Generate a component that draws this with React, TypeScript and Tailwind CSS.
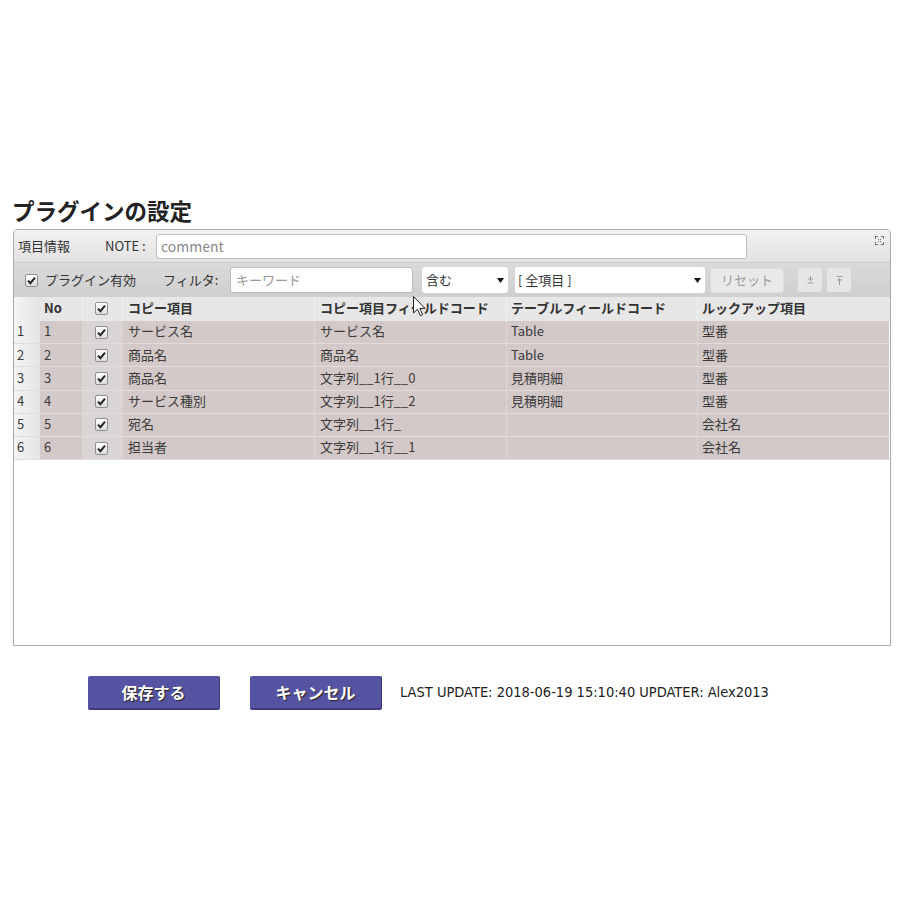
import React from 'react';

const jp = { fontFamily: '"Noto Sans CJK JP", "Noto Sans", sans-serif' };

const rows = [
  { n: '1', item: 'サービス名', field: 'サービス名', table: 'Table', lookup: '型番' },
  { n: '2', item: '商品名', field: '商品名', table: 'Table', lookup: '型番' },
  { n: '3', item: '商品名', field: '文字列__1行__0', table: '見積明細', lookup: '型番' },
  { n: '4', item: 'サービス種別', field: '文字列__1行__2', table: '見積明細', lookup: '型番' },
  { n: '5', item: '宛名', field: '文字列__1行_', table: '', lookup: '会社名' },
  { n: '6', item: '担当者', field: '文字列__1行__1', table: '', lookup: '会社名' },
];

const cols = 'grid grid-cols-[26px_43px_40px_192px_192px_191px_191px]';

const Check = () => (
  <span className="inline-flex w-[13px] h-[13px] items-center justify-center rounded-[2px] border border-[#8f8f8f] bg-gradient-to-b from-white to-[#dcdcdc]">
    <svg width="9" height="9" viewBox="0 0 9 9">
      <path d="M1 4.6 L3.4 7.2 L8 1.6" fill="none" stroke="#222" strokeWidth="1.9" />
    </svg>
  </span>
);

const Arrow = () => (
  <svg width="7" height="5" viewBox="0 0 7 5" className="shrink-0">
    <path d="M0 0 H7 L3.5 5 Z" fill="#111" />
  </svg>
);

export default function App() {
  return (
    <div className="relative w-[920px] h-[920px] bg-white text-[#333]" style={jp}>
      <div className="pt-[195px] px-[13px]">
        <h1 className="text-[22.5px] font-bold leading-[30px] text-[#222] -ml-[1px] mb-[4px]">プラグインの設定</h1>

        <div className="w-[878px] h-[417px] border border-[#a9a9a9] rounded-t-[4px] flex flex-col overflow-hidden">
          {/* top bar */}
          <div className="h-[32px] flex items-center bg-gradient-to-b from-[#f2f2f2] to-[#e2e2e2] text-[13px] relative">
            <span className="pl-[4px] w-[91px]">項目情報</span>
            <span className="w-[51px]">NOTE :</span>
            <div className="w-[591px] h-[25px] bg-white border border-[#bdbdbd] rounded-[3px] flex items-center pl-[4px] text-[14px] text-[#888]">comment</div>
            <svg width="9" height="9" viewBox="0 0 9 9" className="absolute right-[6px] top-[6px]">
              <path d="M0 0h3v1H1v2H0z M6 0h3v3H8V1H6z M0 6h1v2h2v1H0z M8 6h1v3H6V8h2z M3 3h1v1H3z M5 3h1v1H5z M3 5h1v1H3z M5 5h1v1H5z" fill="#777" />
            </svg>
          </div>

          {/* filter bar */}
          <div className="h-[35px] flex items-center bg-gradient-to-b from-[#dadada] to-[#cfcfcf] border-t border-[#c9c9c9] text-[13px]">
            <span className="ml-[11px] mr-[7px] flex"><Check /></span>
            <span className="w-[118px]">プラグイン有効</span>
            <span className="w-[67px]">フィルタ:</span>
            <div className="w-[183px] h-[26px] bg-white border border-[#bbb] rounded-[3px] flex items-center pl-[5px] text-[13px] text-[#999]">キーワード</div>
            <div className="ml-[9px] w-[86px] h-[26px] bg-white rounded-[3px] flex items-center justify-between pl-[4px] pr-[4px]">
              <span>含む</span>
              <Arrow />
            </div>
            <div className="ml-[7px] w-[190px] h-[26px] bg-white rounded-[3px] flex items-center justify-between pl-[3px] pr-[4px]">
              <span className="whitespace-pre">[ 全項目 ]</span>
              <Arrow />
            </div>
            <div className="ml-[5px] w-[74px] h-[25px] bg-[#e9e9e9] border border-[#dcdcdc] rounded-[3px] flex items-center justify-center text-[#9a9a9a]">リセット</div>
            <div className="ml-[14px] w-[24px] h-[24px] bg-[#e6e6e6] rounded-[3px] flex items-center justify-center">
              <svg width="7" height="8" viewBox="0 0 7 8"><path d="M3.5 0v5 M1 3h5 M0.5 7h6" stroke="#999" strokeWidth="1" /></svg>
            </div>
            <div className="ml-[5px] w-[24px] h-[24px] bg-[#e6e6e6] rounded-[3px] flex items-center justify-center">
              <svg width="7" height="9" viewBox="0 0 7 9"><path d="M0.5 0.5h6 M3.5 2v7 M1 4h5" stroke="#999" strokeWidth="1" /></svg>
            </div>
          </div>

          {/* header */}
          <div className={`${cols} h-[24px] bg-[#e7e7e7] text-[13px] font-bold text-[#333] items-stretch`}>
            <div className="bg-gradient-to-r from-[#f4f4f4] to-[#e4e4e4]" />
            <div className="flex items-center pl-[4px] pb-[3px] border-r border-[#efefef]">No</div>
            <div className="flex items-center pl-[12px] pb-[2px] border-r border-[#efefef]"><Check /></div>
            <div className="flex items-center pl-[5px] pb-[3px] border-r border-[#efefef]">コピー項目</div>
            <div className="flex items-center pl-[5px] pb-[3px] border-r border-[#efefef]">コピー項目フィールドコード</div>
            <div className="flex items-center pl-[4px] pb-[3px] border-r border-[#efefef]">テーブルフィールドコード</div>
            <div className="flex items-center pl-[4px] pb-[3px]">ルックアップ項目</div>
          </div>

          {/* rows */}
          {rows.map((r) => (
            <div key={r.n} className={`${cols} h-[23.2px] text-[13px] text-[#3a3a3a] border-b border-[#e4dcdb]`}>
              <div className="flex items-center pl-[3px] pb-[2px] bg-gradient-to-r from-[#f4f4f4] to-[#e4e4e4]">{r.n}</div>
              <div className="flex items-center pl-[4px] pb-[2px] bg-[#d3c9c8] border-r border-[#ddd6d5]">{r.n}</div>
              <div className="flex items-center pl-[12px] bg-[#d9d5d5] border-r border-[#ddd6d5]"><Check /></div>
              <div className="flex items-center pl-[5px] pb-[2px] bg-[#d3c9c8] border-r border-[#ddd6d5]">{r.item}</div>
              <div className="flex items-center pl-[5px] pb-[2px] bg-[#d3c9c8] border-r border-[#ddd6d5]">{r.field}</div>
              <div className="flex items-center pl-[4px] pb-[2px] bg-[#d3c9c8] border-r border-[#ddd6d5]">{r.table}</div>
              <div className="flex items-center pl-[4px] pb-[2px] bg-[#d3c9c8]">{r.lookup}</div>
            </div>
          ))}
        </div>

        {/* footer */}
        <div className="flex items-center mt-[30px] pl-[75px]">
          <button className="w-[132px] h-[34px] bg-[#5653a2] border-b-2 border-r border-[#3d3b7c] rounded-[2px] text-white text-[16px] font-bold [text-shadow:1px_1px_1px_#222]">保存する</button>
          <button className="ml-[30px] w-[132px] h-[34px] bg-[#5653a2] border-b-2 border-r border-[#3d3b7c] rounded-[2px] text-white text-[16px] font-bold [text-shadow:1px_1px_1px_#222]">キャンセル</button>
          <span className="ml-[18px] text-[14.5px] text-[#222]" style={{ fontFamily: '"DejaVu Sans Condensed", "Liberation Sans", sans-serif', fontStretch: 'condensed' }}>
            LAST UPDATE: 2018-06-19 15:10:40 UPDATER: Alex2013
          </span>
        </div>
      </div>

      {/* mouse cursor */}
      <svg width="13" height="21" viewBox="0 0 13 21" className="absolute left-[413px] top-[296px]">
        <path d="M0.5 0.5 V17 L4.5 13.2 L7.3 19.8 L9.6 18.8 L6.9 12.4 H12 Z" fill="white" stroke="#222" strokeWidth="1" />
      </svg>
    </div>
  );
}
